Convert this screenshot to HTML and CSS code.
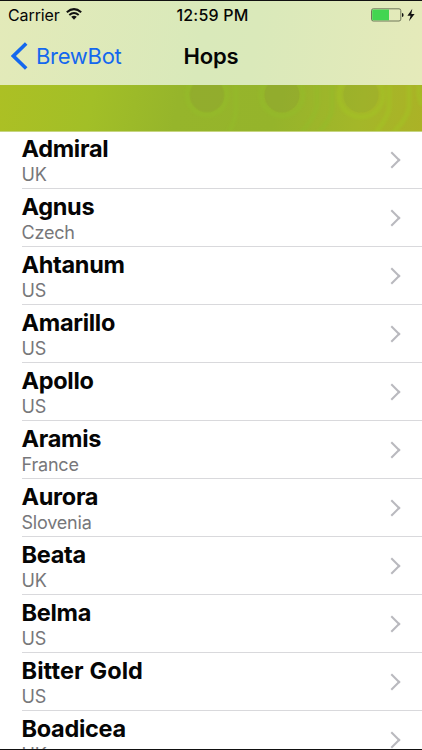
FILE: index.html
```
<!DOCTYPE html>
<html lang="en">
<head>
<meta charset="utf-8">
<title>Hops</title>
<link rel="stylesheet" href="styles.css">
</head>
<body>
<div class="screen">
  <header class="top">
    <div class="status">
      <div class="carrier"><span>Carrier</span>
        <svg class="wifi" width="16" height="12" viewBox="0 0 16 12"><g fill="none" stroke="#111" stroke-width="2"><path d="M.8 4.3Q8-2 15.2 4.3"/><path d="M3.3 7.1Q8 3 12.7 7.1"/></g><path d="M5.2 8.8Q8 6.6 10.8 8.8L8 11.7Z" fill="#111"/></svg>
      </div>
      <div class="clock">12:59 PM</div>
      <div class="power">
        <svg width="45" height="14" viewBox="0 0 45 14"><rect x=".5" y=".8" width="29.3" height="12.2" rx="1.8" fill="none" stroke="#535a43" stroke-width=".8"/><path d="M1.2 1.5H18V12.3H1.2Z" fill="#43d551"/><path d="M31 5Q32.6 5 32.6 7T31 9Z" fill="#111"/><path d="M41.3 .8L36.4 7.7H39.6L38 13.2L43.6 6.1H40.3Z" fill="#111"/></svg>
      </div>
    </div>
    <nav class="nav">
      <a class="back"><svg width="17" height="28" viewBox="0 0 17 28"><path d="M15.2 1.5L2.4 14L15.2 26.5" fill="none" stroke="#1468ee" stroke-width="3.6"/></svg><span>BrewBot</span></a>
      <h1>Hops</h1>
    </nav>
  </header>
  <div class="banner">
    <svg width="422" height="47" viewBox="0 0 422 47" fill="none">
      <g fill="#8b9f30" fill-opacity=".35"><circle cx="207" cy="10" r="17.5"/><circle cx="282" cy="10" r="17.5"/><circle cx="361" cy="10" r="17.5" fill-opacity=".2"/></g>
      <g class="lines" stroke="#94bc2a" stroke-width="5"><circle cx="207" cy="10" r="20"/><path d="M236 0V24Q236 34 229 47"/><circle cx="282" cy="10" r="21"/><path d="M317 0V20Q317 28 302 47M332 0V24Q331 34 319 47"/></g>
      <g class="lines" stroke="#a3c424" stroke-width="5"><circle cx="361" cy="10" r="22"/><path d="M389 0V22Q389 31 376 47M409 0V22Q408 32 394 47M419 0Q418 14 422 20"/></g>
    </svg>
  </div>
  <ul class="list">
    <li><div><b>Admiral</b><small>UK</small></div><i></i></li>
    <li><div><b>Agnus</b><small>Czech</small></div><i></i></li>
    <li><div><b>Ahtanum</b><small>US</small></div><i></i></li>
    <li><div><b>Amarillo</b><small>US</small></div><i></i></li>
    <li><div><b>Apollo</b><small>US</small></div><i></i></li>
    <li><div><b>Aramis</b><small>France</small></div><i></i></li>
    <li><div><b>Aurora</b><small>Slovenia</small></div><i></i></li>
    <li><div><b>Beata</b><small>UK</small></div><i></i></li>
    <li><div><b>Belma</b><small>US</small></div><i></i></li>
    <li><div><b class="wide">Bitter Gold</b><small>US</small></div><i></i></li>
    <li><div><b>Boadicea</b><small>UK</small></div><i></i></li>
  </ul>
</div>
</body>
</html>
```
FILE: styles.css
```
* { box-sizing: border-box; }
body { margin: 0; background: #fff; font-family: Inter, "Liberation Sans", sans-serif; color: #050505; }
.screen { height: 750px; overflow: hidden; border-top: 1px solid #111; border-bottom: 1px solid #111; }
.top { height: 84px; background: linear-gradient(100deg, #e3eab9 0%, #d9e9ba 48%, #dae9ba 60%, #e5eaba 100%); }
.status { height: 28px; display: grid; grid-template-columns: 1fr auto 1fr; align-items: center; padding: 0 6px 0 8px; font-size: 16px; }
.carrier { display: flex; align-items: center; gap: 6px; letter-spacing: -.1px; }
.wifi { margin-top: -2px; }
.clock { font-weight: 550; letter-spacing: .2px; padding-left: 1px; }
.power { display: flex; justify-content: flex-end; }
.nav { height: 56px; display: grid; grid-template-columns: 1fr auto 1fr; align-items: center; padding: 0 11px 2px; }
.back { display: flex; align-items: center; gap: 8px; color: #1468ee; font-size: 22px; letter-spacing: -.3px; }
.nav h1 { margin: 0; font-size: 22px; font-weight: 600; letter-spacing: -.2px; }
.banner { height: 47px; background: linear-gradient(100deg, #acc024 0%, #a2bf27 22%, #96b52b 42%, #95b42b 65%, #a4b729 85%, #abb226 100%); border-bottom: 1px solid #c6d581; overflow: hidden; }
.banner svg { display: block; }
.lines { opacity: .5; filter: blur(.8px); }
.list { list-style: none; margin: 0; padding: 0 0 0 21.5px; }
.list li { height: 58px; display: flex; justify-content: space-between; padding-right: 24.5px; border-bottom: 1px solid #d9d9dc; }
.list li:first-child { height: 57px; }
.list b { display: block; font-size: 23.5px; line-height: 28px; margin-top: 4px; font-weight: 650; letter-spacing: -.3px; }
.list .wide { letter-spacing: .1px; }
.list small { display: block; font-size: 18px; line-height: 24px; color: #77777a; font-weight: 380; letter-spacing: -.2px; }
.list i { width: 12px; height: 12px; border: solid #b9b9be; border-width: 2.6px 2.6px 0 0; transform: rotate(45deg); margin-top: 22.5px; }
.list li:first-child b { margin-top: 3px; }
.list li:first-child i { margin-top: 21.5px; }
```
